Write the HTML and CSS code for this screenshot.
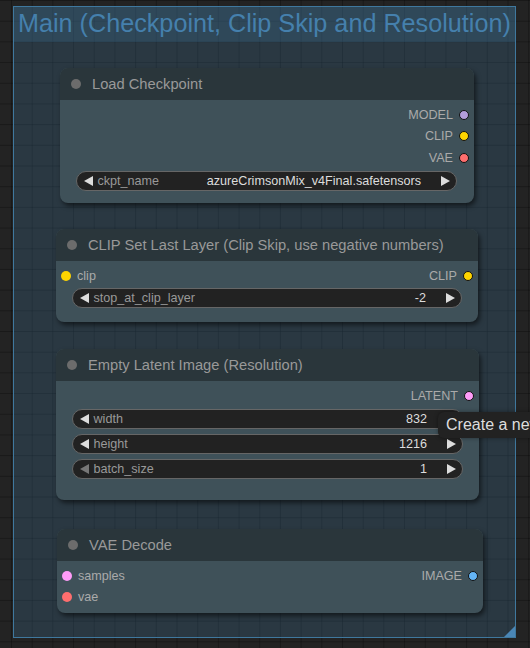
FILE: index.html
```html
<!DOCTYPE html>
<html>
<head>
<meta charset="utf-8">
<link rel="stylesheet" href="styles.css">
</head>
<body>
<div class="canvas">
  <div class="group">
    <div class="group-title">Main (Checkpoint, Clip Skip and Resolution)</div>
    <div class="group-body"></div>
    <div class="resize"></div>
  </div>

  <div class="node n1">
    <div class="title"><span class="tdot"></span><span class="ttext">Load Checkpoint</span></div>
    <div class="body">
      <div class="row out"><span class="lbl">MODEL</span><span class="dot model"></span></div>
      <div class="row out"><span class="lbl">CLIP</span><span class="dot clip"></span></div>
      <div class="row out"><span class="lbl">VAE</span><span class="dot vae"></span></div>
      <div class="widget">
        <span class="arr left"></span>
        <span class="wlabel">ckpt_name</span>
        <span class="wvalue">azureCrimsonMix_v4Final.safetensors</span>
        <span class="arr right"></span>
      </div>
    </div>
  </div>

  <div class="node n2">
    <div class="title"><span class="tdot"></span><span class="ttext">CLIP Set Last Layer (Clip Skip, use negative numbers)</span></div>
    <div class="body">
      <div class="row both"><span class="in"><span class="dot clip flat"></span><span class="lbl">clip</span></span><span class="o"><span class="lbl">CLIP</span><span class="dot clip"></span></span></div>
      <div class="widget">
        <span class="arr left"></span>
        <span class="wlabel">stop_at_clip_layer</span>
        <span class="wvalue">-2</span>
        <span class="arr right"></span>
      </div>
    </div>
  </div>

  <div class="node n3">
    <div class="title"><span class="tdot"></span><span class="ttext">Empty Latent Image (Resolution)</span></div>
    <div class="body">
      <div class="row out"><span class="lbl">LATENT</span><span class="dot latent"></span></div>
      <div class="widgets">
        <div class="widget">
          <span class="arr left"></span>
          <span class="wlabel">width</span>
          <span class="wvalue">832</span>
          <span class="arr right"></span>
        </div>
        <div class="widget">
          <span class="arr left"></span>
          <span class="wlabel">height</span>
          <span class="wvalue">1216</span>
          <span class="arr right"></span>
        </div>
        <div class="widget">
          <span class="arr left dim"></span>
          <span class="wlabel">batch_size</span>
          <span class="wvalue">1</span>
          <span class="arr right"></span>
        </div>
      </div>
    </div>
  </div>

  <div class="node n4">
    <div class="title"><span class="tdot"></span><span class="ttext">VAE Decode</span></div>
    <div class="body">
      <div class="row both"><span class="in"><span class="dot latent flat"></span><span class="lbl">samples</span></span><span class="o"><span class="lbl">IMAGE</span><span class="dot image"></span></span></div>
      <div class="row both"><span class="in"><span class="dot vae flat"></span><span class="lbl">vae</span></span></div>
    </div>
  </div>

  <div class="tooltip">Create a new batch of empty latent images to be denoised via sampling.</div>
</div>
</body>
</html>
```

FILE: styles.css
```css
html, body {
  margin: 0;
  padding: 0;
  width: 530px;
  height: 648px;
  overflow: hidden;
  background: #222;
}

.canvas {
  position: relative;
  width: 530px;
  height: 648px;
  overflow: hidden;
  background-color: #232323;
  background-image:
    linear-gradient(rgba(0,0,0,0.28) 1px, transparent 1px),
    linear-gradient(90deg, rgba(0,0,0,0.28) 1px, transparent 1px);
  background-size: 20.7px 20.7px;
  background-position: 11px 0;
  font-family: "Liberation Sans", Arial, sans-serif;
}

.group {
  position: absolute;
  left: 13px;
  top: 6px;
  width: 503px;
  height: 632px;
  box-sizing: border-box;
  border: 1.5px solid #3f789e;
  background: rgba(63, 120, 158, 0.25);
  display: flex;
  flex-direction: column;
}

.group-title {
  height: 35px;
  flex: none;
  background: rgba(63, 120, 158, 0.25);
  color: #4580ad;
  font-size: 25.2px;
  line-height: 33px;
  padding-left: 4px;
  white-space: nowrap;
  overflow: hidden;
}

.group-body { flex: 1; }

.resize {
  position: absolute;
  right: 0;
  bottom: 0;
  width: 0;
  height: 0;
  border-left: 11px solid transparent;
  border-bottom: 11px solid #4a86b5;
}

.node {
  position: absolute;
  border-radius: 8px;
  background: #3f5159;
  box-shadow: 2px 3px 5px rgba(0, 0, 0, 0.55);
  display: flex;
  flex-direction: column;
}

.n1 { left: 60px; top: 68px; width: 414px; height: 135px; }
.n2 { left: 56px; top: 229px; width: 422px; height: 93px; }
.n3 { left: 56px; top: 349px; width: 423px; height: 151px; }
.n4 { left: 57px; top: 529px; width: 426px; height: 84px; }

.title {
  height: 32px;
  flex: none;
  background: #2a363b;
  border-radius: 8px 8px 0 0;
  display: flex;
  align-items: center;
  padding-left: 11px;
  gap: 11px;
}

.tdot {
  width: 10px;
  height: 10px;
  border-radius: 50%;
  background: #6c6c6c;
  flex: none;
}

.ttext {
  color: #999;
  font-size: 14.7px;
  white-space: nowrap;
}

.body {
  display: flex;
  flex-direction: column;
  padding-top: 4px;
}

.row {
  height: 21.5px;
  flex: none;
  display: flex;
  align-items: center;
  font-size: 12.6px;
  color: #aaa;
}

.row.out {
  justify-content: flex-end;
  padding-right: 5.5px;
  gap: 5.5px;
}

.row.both {
  justify-content: space-between;
  padding: 0 5.5px 0 5px;
}

.n4 .row { height: 21px; }

.in, .o {
  display: flex;
  align-items: center;
  gap: 6px;
}

.o { gap: 5.5px; }

.dot {
  width: 10px;
  height: 10px;
  box-sizing: border-box;
  border-radius: 50%;
  border: 1px solid #111;
  flex: none;
}

.dot.flat { border: none; }

.model { background: #b39ddb; }
.clip { background: #ffd500; }
.vae { background: #ff6e6e; }
.latent { background: #ff9cf9; }
.image { background: #64b5f6; }

.widget {
  height: 20px;
  flex: none;
  box-sizing: border-box;
  margin: 2.5px 17px 0 16px;
  border: 1px solid #666;
  border-radius: 10px;
  background: #222;
  display: flex;
  align-items: center;
  font-size: 12.6px;
  padding: 0 6px 0 6.5px;
}

.n2 .widget { margin: 1.5px 16px 0 16px; }

.widgets {
  display: flex;
  flex-direction: column;
  gap: 5px;
  padding-top: 2.5px;
}

.n3 .widgets .widget { margin: 0 16px; }

.arr {
  width: 0;
  height: 0;
  border-top: 5.5px solid transparent;
  border-bottom: 5.5px solid transparent;
  flex: none;
}

.arr.left { border-right: 9.5px solid #ddd; }
.arr.left.dim { border-right-color: #777; }
.arr.right { border-left: 9.5px solid #ddd; margin-left: 20px; }

.wlabel {
  color: #999;
  margin-left: 5px;
  white-space: nowrap;
}

.wvalue {
  color: #ddd;
  margin-left: auto;
  white-space: nowrap;
}

.tooltip {
  position: absolute;
  left: 438px;
  top: 412px;
  height: 26px;
  padding: 0 8px;
  background: #222;
  color: #ddd;
  font-size: 16px;
  line-height: 26px;
  border-radius: 6px;
  white-space: nowrap;
  box-shadow: 0 0 4px rgba(0, 0, 0, 0.4);
}
```
